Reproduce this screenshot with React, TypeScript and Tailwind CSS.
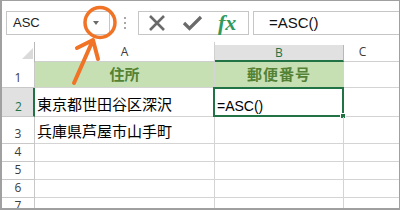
import React from "react";

const rows = [
  { n: "1", h: "h-[26px]", a: "住所", b: "郵便番号", head: true },
  { n: "2", h: "h-[29px]", a: "東京都世田谷区深沢", b: "=ASC()", active: true },
  { n: "3", h: "h-[27px]", a: "兵庫県芦屋市山手町", b: "" },
  { n: "4", h: "h-[18px]", a: "", b: "" },
  { n: "5", h: "h-[18px]", a: "", b: "" },
  { n: "6", h: "h-[18px]", a: "", b: "" },
  { n: "7", h: "h-[18px]", a: "", b: "" },
];

const jp = { fontFamily: '"Noto Sans CJK JP", sans-serif' };
const ui = { fontFamily: '"Open Sans", sans-serif' };
const arial = { fontFamily: '"Liberation Sans", Arial, sans-serif' };

function FormulaBar() {
  return (
    <div className="flex h-[41px] items-start pl-[4px] pt-[10px]">
      <div className="flex h-[24px] w-[104px] items-center justify-between border border-[#c6c6c6] bg-white pl-[6px] pr-[10px]">
        <span style={arial} className="text-[13px] text-[#222]">
          ASC
        </span>
        <span className="h-0 w-0 border-x-[3px] border-t-[4px] border-x-transparent border-t-[#6a6a6a]" />
      </div>
      <div className="flex h-[24px] w-[28px] flex-col items-center justify-center gap-[3px] pl-[1px]">
        <span className="h-[2px] w-[2px] bg-[#a8a8a8]" />
        <span className="h-[2px] w-[2px] bg-[#a8a8a8]" />
        <span className="h-[2px] w-[2px] bg-[#a8a8a8]" />
      </div>
      <div className="flex h-[24px] w-[111px] items-center border border-[#c6c6c6] bg-white pl-[9px]">
        <svg width="18" height="18" viewBox="0 0 18 18">
          <path d="M2 2 L16 16 M16 2 L2 16" stroke="#6a6a6a" strokeWidth="2.6" fill="none" />
        </svg>
        <svg width="21" height="18" viewBox="0 0 21 18" className="ml-[16px]">
          <path d="M2 9 L7.5 14.5 L19 3" stroke="#6a6a6a" strokeWidth="3.2" fill="none" />
        </svg>
        <span
          className="ml-[15px] text-[22px] font-semibold italic leading-none text-[#2f9a5c]"
          style={{ fontFamily: '"Liberation Serif", serif' }}
        >
          fx
        </span>
      </div>
      <div className="ml-[4px] flex h-[24px] flex-1 items-center border-y border-l border-[#c6c6c6] bg-white pl-[15px]">
        <span style={arial} className="text-[15px] font-medium text-[#111]">
          =ASC()
        </span>
      </div>
    </div>
  );
}

function HeaderRow() {
  return (
    <div className="grid h-[20px] grid-cols-[33px_180px_129px_1fr]">
      <div className="relative border-r border-[#b8b8b8]">
        <span className="absolute bottom-[3px] right-[1px] h-0 w-0 border-b-[11px] border-l-[11px] border-b-[#dadada] border-l-transparent" />
      </div>
      <div style={ui} className="flex items-end justify-center border-b border-r border-[#d0d0d0] pb-[1px] text-[12px] leading-none text-[#3c3c3c]">
        <span className="mb-[2px]">A</span>
      </div>
      <div className="border-t-[3px] border-white">
        <div style={ui} className="flex h-full items-center justify-center border-b-2 border-r border-b-[#217346] border-r-[#b8b8b8] bg-[#e1e1e1] text-[12px] leading-none text-[#217346]">
          B
        </div>
      </div>
      <div style={ui} className="flex items-end justify-center border-b border-[#d0d0d0] pb-[3px] pr-[18px] text-[12px] leading-none text-[#3c3c3c]">
        C
      </div>
    </div>
  );
}

export default function App() {
  return (
    <div className="relative h-[210px] w-[400px] overflow-hidden border-b-2 border-l-2 border-r border-t border-[#a0a0a0] bg-white">
      <FormulaBar />
      <HeaderRow />
      {rows.map((r) => (
        <div key={r.n} className={`grid grid-cols-[33px_180px_129px_1fr] ${r.h}`}>
          <div
            style={ui}
            className={
              r.active
                ? "flex items-end justify-center border-b border-r-2 border-b-[#c8c8c8] border-r-[#217346] bg-[#e1e1e1] pb-[3px] pl-[2px] text-[12px] leading-none text-[#217346]"
                : "flex items-end justify-center border-b border-r border-[#c8c8c8] pb-[3px] text-[12px] leading-none text-[#3c3c3c]"
            }
          >
            {r.n}
          </div>
          {r.head ? (
            <>
              <div
                style={jp}
                className="flex items-center justify-center border-b border-r border-[#d4d4d4] bg-[#c6e0b4] text-[15px] font-bold text-[#548235]"
              >
                {r.a}
              </div>
              <div
                style={jp}
                className="flex items-center justify-center border-b border-r border-[#d4d4d4] bg-[#c6e0b4] text-[15px] font-bold tracking-[1px] text-[#548235]"
              >
                {r.b}
              </div>
            </>
          ) : (
            <>
              <div
                style={jp}
                className="flex items-end border-b border-r border-[#d4d4d4] pb-[3px] pl-[2px] text-[15px] leading-[18px] text-black"
              >
                {r.a}
              </div>
              <div className="relative flex items-end border-b border-r border-[#d4d4d4] pb-[2px] pl-[2px]">
                {r.b && (
                  <span style={arial} className="text-[14px] leading-[16px] text-black">
                    {r.b}
                  </span>
                )}
                {r.active && (
                  <>
                    <span className="absolute -left-[2px] -right-[1px] -top-[1px] bottom-[-1px] border-2 border-[#217346]" />
                    <span className="absolute -bottom-[3px] -right-[3px] h-[6px] w-[6px] border border-white bg-[#217346]" />
                  </>
                )}
              </div>
            </>
          )}
          <div className="border-b border-[#d4d4d4]" />
        </div>
      ))}
      <svg className="pointer-events-none absolute left-0 top-0" width="400" height="210" viewBox="0 0 400 210">
        <circle cx="98" cy="21.5" r="15" fill="none" stroke="#f07326" strokeWidth="3.5" />
        <path
          d="M72 82 L91 39 M91 39 L75 47 M91 39 L96 58"
          fill="none"
          stroke="#f07326"
          strokeWidth="4"
          strokeLinecap="round"
          strokeLinejoin="round"
        />
      </svg>
    </div>
  );
}
